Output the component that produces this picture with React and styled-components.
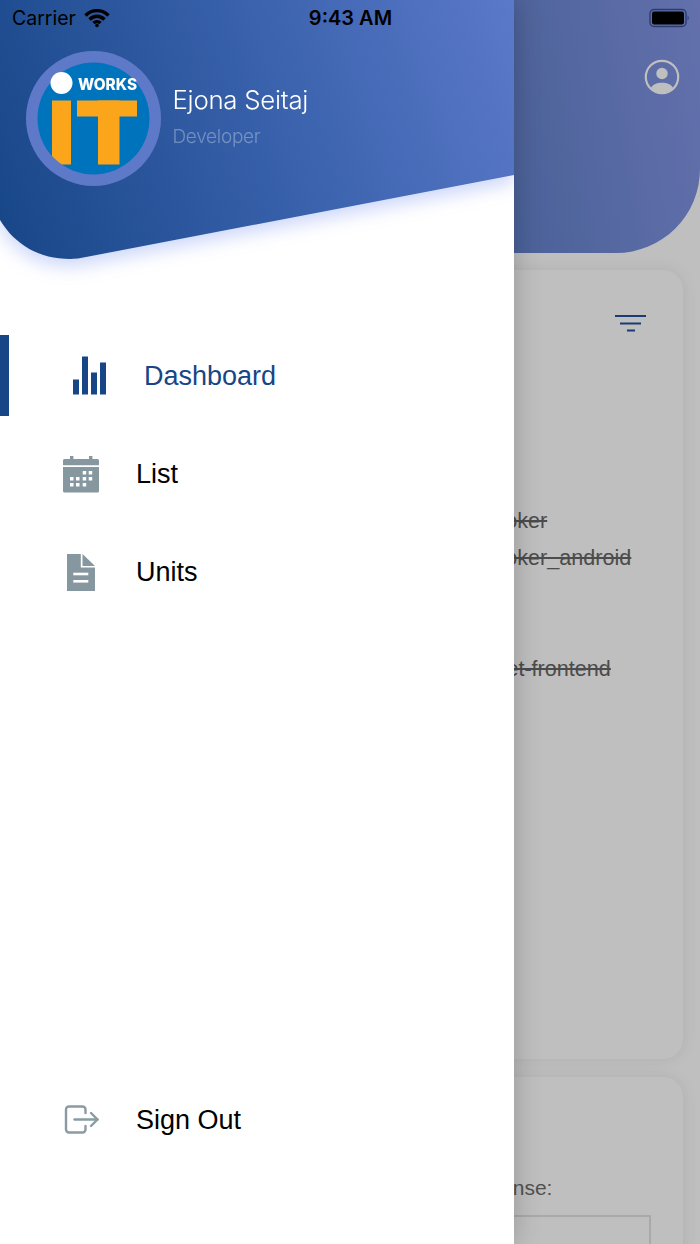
import React from "react";
import styled, { createGlobalStyle } from "styled-components";

const Global = createGlobalStyle`
  html, body { margin: 0; padding: 0; background: #fff; }
  * { box-sizing: border-box; }
`;

const Stage = styled.div`
  position: relative;
  width: 700px;
  height: 1244px;
  overflow: hidden;
  background: #fff;
  font-family: "Liberation Sans", Arial, sans-serif;
`;

/* ---------- screen behind the drawer ---------- */
const AppHeader = styled.header`
  height: 253px;
  display: flex;
  justify-content: flex-end;
  padding: 59px 20px 0 0;
  border-bottom-right-radius: 84px;
  background: linear-gradient(80deg, #1f4f99 0%, #6a86d0 75%, #8496e6 100%);
`;
const ProfileIcon = styled.svg`
  width: 36px;
  height: 36px;
  display: block;
`;
const Cards = styled.main`
  display: flex;
  flex-direction: column;
  gap: 18px;
  padding: 17px 17px 0;
`;
const Card = styled.section`
  height: ${(p) => p.$height}px;
  flex: none;
  padding: ${(p) => p.$pad};
  background: #fff;
  border-radius: 20px;
  box-shadow: 0 0 16px rgba(0, 0, 0, 0.09);
`;
const FilterRow = styled.div`
  display: flex;
  justify-content: flex-end;
  padding-right: 37px;
`;
const FilterIcon = styled.svg`
  width: 31px;
  height: 18px;
  display: block;
`;
const PackageList = styled.ul`
  list-style: none;
  margin: 170px 0 0;
  padding: 0 0 0 445px;
`;
const PackageItem = styled.li`
  height: 37px;
  margin-top: ${(p) => p.$gap || 0}px;
  font-size: 21.6px;
  line-height: 37px;
  white-space: nowrap;
  color: #666;
  text-decoration: line-through;
  text-decoration-thickness: 2px;
`;
const FieldLabel = styled.div`
  font-size: 21px;
  line-height: 26px;
  color: #6d6d6d;
`;
const FieldBox = styled.div`
  height: 60px;
  margin-top: 14px;
  border: 2px solid #e2e2e2;
`;
const Dim = styled.div`
  position: absolute;
  inset: 0;
  background: rgba(0, 0, 0, 0.25);
`;

/* ---------- drawer ---------- */
const Drawer = styled.aside`
  position: absolute;
  top: 0;
  left: 0;
  bottom: 0;
  width: 514px;
  display: flex;
  flex-direction: column;
  background: #fff;
  overflow: hidden;
  box-shadow: 0 0 26px rgba(0, 0, 0, 0.22);
`;
const HeroShadow = styled.div`
  flex: none;
  height: 260px;
  filter: drop-shadow(0 7px 9px rgba(70, 105, 235, 0.28));
`;
const Hero = styled.div`
  height: 260px;
  display: flex;
  align-items: flex-start;
  gap: 11.5px;
  padding: 51px 0 0 26px;
  background: linear-gradient(72deg, #174687 0%, #3a62ad 55%, #5b79c9 100%);
  clip-path: path("M0 0 H514 V175 L86 257 Q78 259 70 259 C40 259 15 245 0 220 Z");
`;
const Logo = styled.svg`
  width: 135px;
  height: 135px;
  flex: none;
  display: block;
`;
const Person = styled.div`
  display: flex;
  flex-direction: column;
  padding-top: 31px;
  font-family: Inter, sans-serif;
  font-weight: 300;
`;
const PersonName = styled.div`
  font-size: 25.8px;
  line-height: 36px;
  letter-spacing: -0.25px;
  color: #fff;
`;
const PersonRole = styled.div`
  margin-top: 6px;
  font-size: 19px;
  line-height: 26px;
  letter-spacing: -0.3px;
  color: rgba(255, 255, 255, 0.32);
`;
const Nav = styled.nav`
  flex: 1;
  display: flex;
  flex-direction: column;
  gap: 17px;
  padding: 75px 0 84px;
`;
const NavRow = styled.div`
  height: 81px;
  display: flex;
  align-items: center;
  gap: 35px;
  padding-left: ${(p) => (p.$active ? 60 : 61)}px;
  border-left: ${(p) => (p.$active ? "9px solid #174687" : "0")};
  margin-top: ${(p) => (p.$bottom ? "auto" : "0")};
  color: ${(p) => (p.$active ? "#174687" : "#000")};
  font-size: 27px;
`;
const NavLabel = styled.span`
  padding-top: 2px;
`;
const NavIcon = styled.svg`
  width: 40px;
  height: 40px;
  flex: none;
  display: block;
  overflow: visible;
`;

/* ---------- status bar ---------- */
const StatusBar = styled.div`
  position: absolute;
  top: 0;
  left: 0;
  right: 0;
  height: 36px;
  display: grid;
  grid-template-columns: 1fr auto 1fr;
  align-items: center;
  padding: 0 11px 0 12px;
  font-family: Inter, sans-serif;
  color: #000;
`;
const Carrier = styled.div`
  display: flex;
  align-items: center;
  gap: 8px;
  font-size: 19.5px;
`;
const Clock = styled.div`
  font-size: 20px;
  font-weight: 600;
`;
const Battery = styled.svg`
  width: 40px;
  height: 20px;
  justify-self: end;
  display: block;
`;

const Dashboard = () => (
  <NavIcon viewBox="0 0 40 40" fill="#174687">
    <rect x="4" y="23.5" width="6" height="15" />
    <rect x="13" y="0.5" width="6" height="38" />
    <rect x="22" y="16.5" width="6" height="22" />
    <rect x="31" y="6.5" width="6" height="32" />
  </NavIcon>
);

const CAL = [
  [19.7, 15], [25.7, 15],
  [7, 21], [13, 21], [19.7, 21], [25.7, 21],
  [7, 27], [13, 27], [19.7, 27],
];
const Calendar = () => (
  <NavIcon viewBox="-2 -2 40 40" fill="#87979f">
    <rect x="7" y="0" width="3.4" height="4" />
    <rect x="26" y="0" width="3.4" height="4" />
    <path d="M1.5 3H34.5A1.5 1.5 0 0 1 36 4.5V9.3H0V4.5A1.5 1.5 0 0 1 1.5 3Z" />
    <path d="M0 11H36V35A1.5 1.5 0 0 1 34.5 36.5H1.5A1.5 1.5 0 0 1 0 35Z" />
    {CAL.map(([x, y]) => (
      <rect key={`${x}-${y}`} x={x} y={y} width="3.5" height="3.5" fill="#fff" />
    ))}
  </NavIcon>
);

const Doc = () => (
  <NavIcon viewBox="0 0 40 40" fill="#87979f">
    <path d="M6 2H19.8V15.5H34V39H6Z" />
    <path d="M21.5 2L34 14H21.5Z" />
    <rect x="12.3" y="20.7" width="15" height="2.6" fill="#fff" />
    <rect x="12.3" y="28" width="15" height="2.6" fill="#fff" />
  </NavIcon>
);

const SignOut = () => (
  <NavIcon viewBox="0 0 40 40" fill="none" stroke="#8a9ba5" strokeWidth="2.4" strokeLinecap="round" strokeLinejoin="round">
    <path d="M24.5 13V9.5A3 3 0 0 0 21.5 6.5H8A3 3 0 0 0 5 9.5V29.5A3 3 0 0 0 8 32.5H21.5A3 3 0 0 0 24.5 29.5V26" />
    <path d="M13.5 19.5H36.5" />
    <path d="M30 13L36.5 19.5L30 26" />
  </NavIcon>
);

export default function App() {
  return (
    <Stage>
      <Global />
      <AppHeader>
        <ProfileIcon viewBox="0 0 36 36">
          <circle cx="18" cy="18" r="16.2" fill="none" stroke="#fff" strokeWidth="2.2" />
          <circle cx="18" cy="14.5" r="5.7" fill="#fff" />
          <path d="M6.8 29C9 25 13.5 23.7 18 23.7C22.5 23.7 27 25 29.2 29C26.5 32.2 22.5 33.5 18 33.5C13.5 33.5 9.5 32.2 6.8 29Z" fill="#fff" />
        </ProfileIcon>
      </AppHeader>
      <Cards>
        <Card $height={789} $pad="44px 0 0">
          <FilterRow>
            <FilterIcon viewBox="0 0 31 18" stroke="#22509a" strokeWidth="2">
              <path d="M0 2H31M5 9.5H26M12 16.5H20" />
            </FilterIcon>
          </FilterRow>
          <PackageList>
            <PackageItem>a_broker</PackageItem>
            <PackageItem>a_broker_android</PackageItem>
            <PackageItem $gap={74}>widget-frontend</PackageItem>
          </PackageList>
        </Card>
        <Card $height={300} $pad="98px 32px 0 435px">
          <FieldLabel>Response:</FieldLabel>
          <FieldBox />
        </Card>
      </Cards>
      <Dim />
      <Drawer>
        <HeroShadow>
          <Hero>
            <Logo viewBox="0 0 135 135">
              <defs>
                <clipPath id="logoClip">
                  <circle cx="67.5" cy="67.5" r="56" />
                </clipPath>
              </defs>
              <circle cx="67.5" cy="67.5" r="67.5" fill="#5f79c9" />
              <circle cx="67.5" cy="67.5" r="56" fill="#0073bd" />
              <g clipPath="url(#logoClip)" fill="#fba61a">
                <rect x="26" y="49.5" width="19" height="64" />
                <rect x="51" y="49.5" width="60" height="16" />
                <rect x="72" y="49.5" width="21.5" height="64" />
              </g>
              <circle cx="35.5" cy="32" r="11" fill="#fff" />
              <text x="52" y="38.5" fontFamily="Inter, sans-serif" fontWeight="800" fontSize="15.5" fill="#fff" textLength="59" lengthAdjust="spacingAndGlyphs">WORKS</text>
            </Logo>
            <Person>
              <PersonName>Ejona Seitaj</PersonName>
              <PersonRole>Developer</PersonRole>
            </Person>
          </Hero>
        </HeroShadow>
        <Nav>
          <NavRow $active>
            <Dashboard />
            <NavLabel>Dashboard</NavLabel>
          </NavRow>
          <NavRow>
            <Calendar />
            <NavLabel>List</NavLabel>
          </NavRow>
          <NavRow>
            <Doc />
            <NavLabel>Units</NavLabel>
          </NavRow>
          <NavRow $bottom>
            <SignOut />
            <NavLabel>Sign Out</NavLabel>
          </NavRow>
        </Nav>
      </Drawer>
      <StatusBar>
        <Carrier>
          <span>Carrier</span>
          <svg width="26" height="20" viewBox="0 0 26 20" fill="none" stroke="#000" strokeWidth="3.4">
            <path d="M1.5 7.5C8 1 18 1 24.5 7.5" />
            <path d="M5.5 11.5C10 7.2 16 7.2 20.5 11.5" />
            <path d="M9.5 15C11.5 13.3 14.5 13.3 16.5 15" />
            <circle cx="13" cy="17.5" r="1.8" fill="#000" stroke="none" />
          </svg>
        </Carrier>
        <Clock>9:43 AM</Clock>
        <Battery viewBox="0 0 40 20">
          <rect x="1" y="1.5" width="36" height="17" rx="4" fill="none" stroke="#2c3c70" strokeWidth="1.4" />
          <rect x="3" y="3.5" width="32" height="13" rx="2.2" fill="#000" />
          <path d="M38.6 7.5C40 8.2 40 11.8 38.6 12.5Z" fill="#2c3c70" />
        </Battery>
      </StatusBar>
    </Stage>
  );
}
